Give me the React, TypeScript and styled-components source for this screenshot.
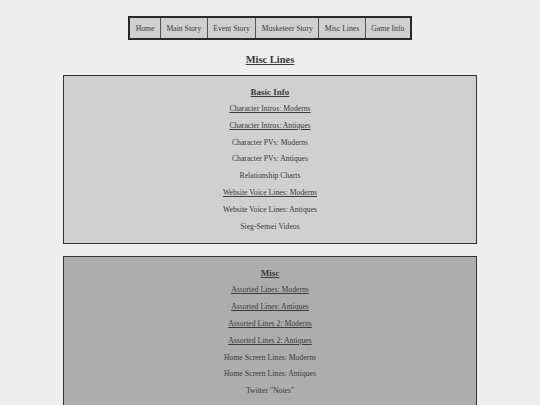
import React from 'react';
import styled, { createGlobalStyle } from 'styled-components';

const GlobalStyle = createGlobalStyle`
  html, body {
    margin: 0;
    padding: 0;
    background: #eeeeee;
  }
  body {
    font-family: 'Liberation Serif', 'Times New Roman', serif;
    color: #3a3a3a;
  }
`;

const Page = styled.div`
  display: flex;
  flex-direction: column;
  align-items: center;
  padding: 16px 63px 0;
`;

const Nav = styled.nav`
  display: flex;
  border: 2px solid #2a2a2a;
  background: #d0d0d0;
`;

const NavItem = styled.a`
  display: flex;
  align-items: center;
  height: 20px;
  padding: 0 5.5px;
  font-size: 7.7px;
  color: #3a3a3a;
  text-decoration: none;
  &:not(:first-child) {
    border-left: 1px solid #555555;
  }
`;

const PageTitle = styled.h1`
  margin: 13px 0 9px;
  font-size: 10.5px;
  line-height: 13px;
  font-weight: bold;
  text-decoration: underline;
`;

const Section = styled.section<{ $shade: string }>`
  align-self: stretch;
  display: flex;
  flex-direction: column;
  align-items: center;
  padding: 8px 0 8px;
  margin-bottom: 12px;
  border: 1px solid #333333;
  background: ${(p) => p.$shade};
`;

const SectionTitle = styled.h2`
  margin: 0;
  font-size: 9px;
  line-height: 17px;
  font-weight: bold;
  text-decoration: underline;
`;

const Line = styled.div<{ $link?: boolean }>`
  font-size: 7.7px;
  line-height: 16.8px;
  text-decoration: ${(p) => (p.$link ? 'underline' : 'none')};
`;

const navItems = ['Home', 'Main Story', 'Event Story', 'Musketeer Story', 'Misc Lines', 'Game Info'];

const sections = [
  {
    title: 'Basic Info',
    shade: '#d0d0d0',
    lines: [
      { text: 'Character Intros: Moderns', link: true },
      { text: 'Character Intros: Antiques', link: true },
      { text: 'Character PVs: Moderns' },
      { text: 'Character PVs: Antiques' },
      { text: 'Relationship Charts' },
      { text: 'Website Voice Lines: Moderns', link: true },
      { text: 'Website Voice Lines: Antiques' },
      { text: 'Sieg-Sensei Videos' },
    ],
  },
  {
    title: 'Misc',
    shade: '#adadad',
    lines: [
      { text: 'Assorted Lines: Moderns', link: true },
      { text: 'Assorted Lines: Antiques', link: true },
      { text: 'Assorted Lines 2: Moderns', link: true },
      { text: 'Assorted Lines 2: Antiques', link: true },
      { text: 'Home Screen Lines: Moderns' },
      { text: 'Home Screen Lines: Antiques' },
      { text: 'Twitter "Notes"' },
    ],
  },
];

const App: React.FC = () => {
  return (
    <>
      <GlobalStyle />
      <Page>
        <Nav>
          {navItems.map((item) => (
            <NavItem key={item}>{item}</NavItem>
          ))}
        </Nav>
        <PageTitle>Misc Lines</PageTitle>
        {sections.map((section) => (
          <Section key={section.title} $shade={section.shade}>
            <SectionTitle>{section.title}</SectionTitle>
            {section.lines.map((line) => (
              <Line key={line.text} $link={line.link}>
                {line.text}
              </Line>
            ))}
          </Section>
        ))}
      </Page>
    </>
  );
};

export default App;
